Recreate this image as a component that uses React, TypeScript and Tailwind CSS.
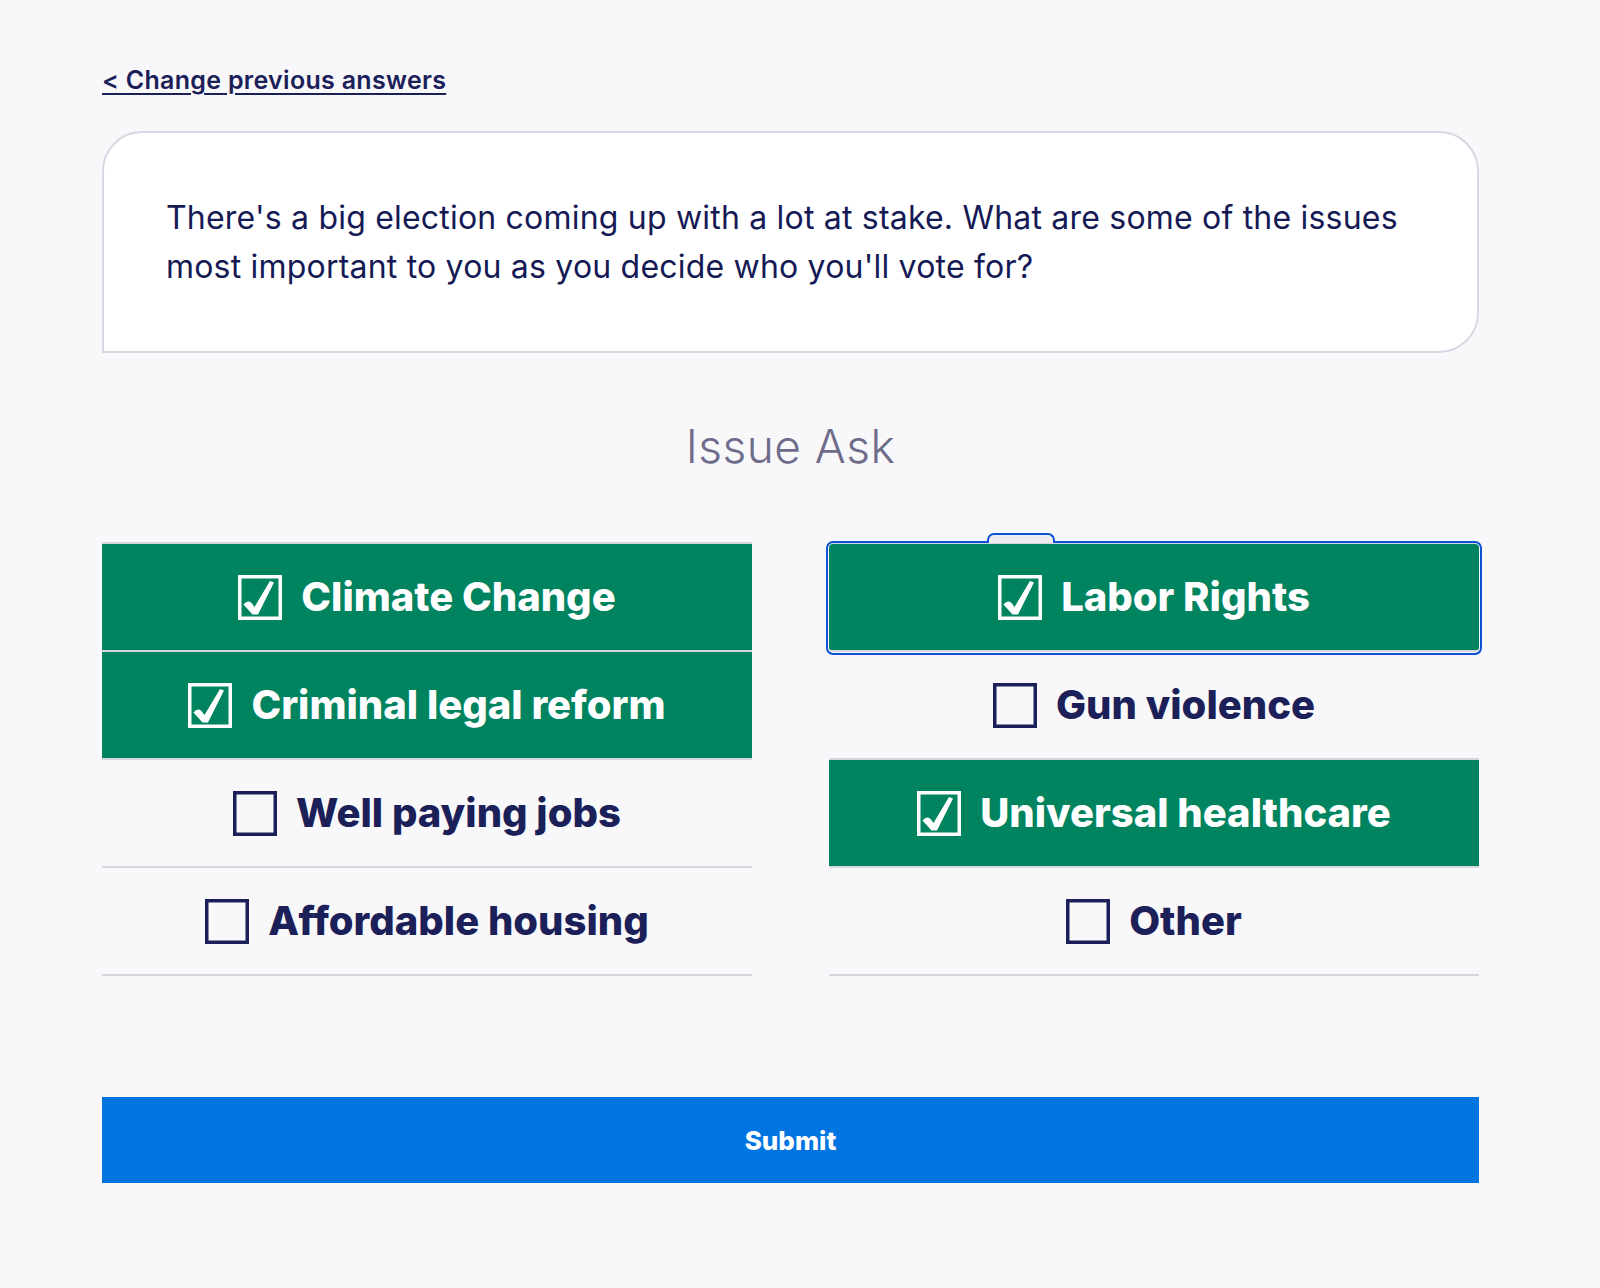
import { useState } from 'react';

type Issue = { id: string; label: string };

const leftIssues: Issue[] = [
  { id: 'climate', label: 'Climate Change' },
  { id: 'criminal', label: 'Criminal legal reform' },
  { id: 'jobs', label: 'Well paying jobs' },
  { id: 'housing', label: 'Affordable housing' },
];

const rightIssues: Issue[] = [
  { id: 'labor', label: 'Labor Rights' },
  { id: 'guns', label: 'Gun violence' },
  { id: 'healthcare', label: 'Universal healthcare' },
  { id: 'other', label: 'Other' },
];

function CheckBox({ checked }: { checked: boolean }) {
  const color = checked ? '#ffffff' : '#1b2058';
  return (
    <svg width="44" height="45" viewBox="0 0 44 45" className="shrink-0">
      <rect x="1.75" y="1.75" width="40.5" height="41.5" fill="none" stroke={color} strokeWidth="3.5" />
      {checked && (
        <path
          d="M5.5 29.5 Q9.5 24.5 13.5 28 L16.5 32 L32 6 L36 7.5 L20 39.5 L14.5 39.5 Z"
          fill={color}
        />
      )}
    </svg>
  );
}

function IssueCell({
  issue,
  checked,
  focused,
  onToggle,
}: {
  issue: Issue;
  checked: boolean;
  focused: boolean;
  onToggle: () => void;
}) {
  return (
    <button
      type="button"
      onClick={onToggle}
      className={
        'relative flex h-[108px] w-full items-center justify-center gap-[19px] border-b-2 border-[#d7d6df] ' +
        (checked ? 'bg-[#00835f] text-white ' : 'bg-transparent text-[#1b2058] ') +
        (focused ? 'rounded-[4px] outline-2 outline-offset-1 outline-[#0b52d4]' : '')
      }
    >
      {focused && (
        <span className="absolute left-[158px] top-[-11px] h-[10px] w-[68px] rounded-t-[7px] border-2 border-b-0 border-[#0b52d4] bg-[#ececf1]" />
      )}
      <CheckBox checked={checked} />
      <span className="text-[40px] font-extrabold leading-none">{issue.label}</span>
    </button>
  );
}

export default function App() {
  const [selected, setSelected] = useState<Record<string, boolean>>({
    climate: true,
    criminal: true,
    labor: true,
    healthcare: true,
  });

  function toggle(id: string) {
    setSelected((prev) => ({ ...prev, [id]: !prev[id] }));
  }

  return (
    <div className="min-h-screen bg-[#f8f8fb] pl-[102px] pt-[62px] font-['Inter',_sans-serif] text-[#1b2058]">
      <div className="w-[1377px]">
        <a href="#" className="text-[25px] font-semibold leading-[37px] tracking-[0.3px] underline underline-offset-[4px]">
          &lt; Change previous answers
        </a>

        <div className="mt-[32px] rounded-tl-[40px] rounded-tr-[40px] rounded-br-[40px] border-2 border-[#d8d7e3] bg-white px-[62px] py-[60px]">
          <p className="text-[32px] leading-[49px] tracking-[0.2px] text-[#151a55]">
            There's a big election coming up with a lot at stake. What are some of the issues
            <br />
            most important to you as you decide who you'll vote for?
          </p>
        </div>

        <h2 className="mt-[63px] text-center text-[46px] font-light leading-[60px] tracking-[0.5px] text-[#6f6b8b]">
          Issue Ask
        </h2>

        <div className="mt-[66px] grid grid-cols-2 gap-x-[77px]">
          <div className="border-t-2 border-[#d7d6df]">
            {leftIssues.map((issue) => (
              <IssueCell
                key={issue.id}
                issue={issue}
                checked={!!selected[issue.id]}
                focused={false}
                onToggle={() => toggle(issue.id)}
              />
            ))}
          </div>
          <div className="border-t-2 border-[#d7d6df]">
            {rightIssues.map((issue) => (
              <IssueCell
                key={issue.id}
                issue={issue}
                checked={!!selected[issue.id]}
                focused={issue.id === 'labor'}
                onToggle={() => toggle(issue.id)}
              />
            ))}
          </div>
        </div>

        <button
          type="button"
          className="mt-[121px] flex h-[86px] w-full items-center justify-center bg-[#0074e0] text-[26px] font-extrabold text-white"
        >
          Submit
        </button>
      </div>
    </div>
  );
}
